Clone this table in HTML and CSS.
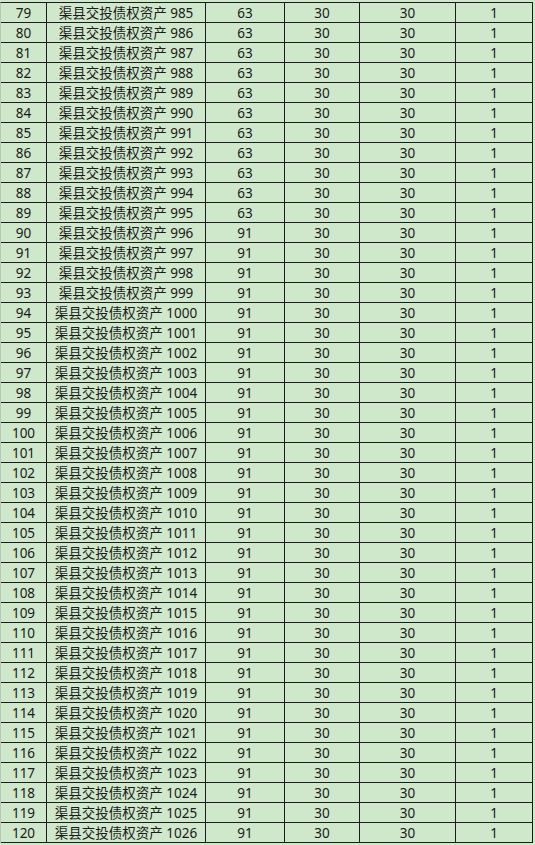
FILE: index.html
```html
<!DOCTYPE html>
<html lang="zh-CN">
<head>
<meta charset="utf-8">
<title>渠县交投债权资产</title>
<link rel="stylesheet" href="styles.css">
</head>
<body>
<table class="sheet">
<colgroup>
<col class="c-no"><col class="c-name"><col class="c-a"><col class="c-b"><col class="c-c"><col class="c-d">
</colgroup>
<tbody>
<tr><td>79</td><td>渠县交投债权资产 985</td><td>63</td><td>30</td><td>30</td><td>1</td></tr>
<tr><td>80</td><td>渠县交投债权资产 986</td><td>63</td><td>30</td><td>30</td><td>1</td></tr>
<tr><td>81</td><td>渠县交投债权资产 987</td><td>63</td><td>30</td><td>30</td><td>1</td></tr>
<tr><td>82</td><td>渠县交投债权资产 988</td><td>63</td><td>30</td><td>30</td><td>1</td></tr>
<tr><td>83</td><td>渠县交投债权资产 989</td><td>63</td><td>30</td><td>30</td><td>1</td></tr>
<tr><td>84</td><td>渠县交投债权资产 990</td><td>63</td><td>30</td><td>30</td><td>1</td></tr>
<tr><td>85</td><td>渠县交投债权资产 991</td><td>63</td><td>30</td><td>30</td><td>1</td></tr>
<tr><td>86</td><td>渠县交投债权资产 992</td><td>63</td><td>30</td><td>30</td><td>1</td></tr>
<tr><td>87</td><td>渠县交投债权资产 993</td><td>63</td><td>30</td><td>30</td><td>1</td></tr>
<tr><td>88</td><td>渠县交投债权资产 994</td><td>63</td><td>30</td><td>30</td><td>1</td></tr>
<tr><td>89</td><td>渠县交投债权资产 995</td><td>63</td><td>30</td><td>30</td><td>1</td></tr>
<tr><td>90</td><td>渠县交投债权资产 996</td><td>91</td><td>30</td><td>30</td><td>1</td></tr>
<tr><td>91</td><td>渠县交投债权资产 997</td><td>91</td><td>30</td><td>30</td><td>1</td></tr>
<tr><td>92</td><td>渠县交投债权资产 998</td><td>91</td><td>30</td><td>30</td><td>1</td></tr>
<tr><td>93</td><td>渠县交投债权资产 999</td><td>91</td><td>30</td><td>30</td><td>1</td></tr>
<tr><td>94</td><td>渠县交投债权资产 1000</td><td>91</td><td>30</td><td>30</td><td>1</td></tr>
<tr><td>95</td><td>渠县交投债权资产 1001</td><td>91</td><td>30</td><td>30</td><td>1</td></tr>
<tr><td>96</td><td>渠县交投债权资产 1002</td><td>91</td><td>30</td><td>30</td><td>1</td></tr>
<tr><td>97</td><td>渠县交投债权资产 1003</td><td>91</td><td>30</td><td>30</td><td>1</td></tr>
<tr><td>98</td><td>渠县交投债权资产 1004</td><td>91</td><td>30</td><td>30</td><td>1</td></tr>
<tr><td>99</td><td>渠县交投债权资产 1005</td><td>91</td><td>30</td><td>30</td><td>1</td></tr>
<tr><td>100</td><td>渠县交投债权资产 1006</td><td>91</td><td>30</td><td>30</td><td>1</td></tr>
<tr><td>101</td><td>渠县交投债权资产 1007</td><td>91</td><td>30</td><td>30</td><td>1</td></tr>
<tr><td>102</td><td>渠县交投债权资产 1008</td><td>91</td><td>30</td><td>30</td><td>1</td></tr>
<tr><td>103</td><td>渠县交投债权资产 1009</td><td>91</td><td>30</td><td>30</td><td>1</td></tr>
<tr><td>104</td><td>渠县交投债权资产 1010</td><td>91</td><td>30</td><td>30</td><td>1</td></tr>
<tr><td>105</td><td>渠县交投债权资产 1011</td><td>91</td><td>30</td><td>30</td><td>1</td></tr>
<tr><td>106</td><td>渠县交投债权资产 1012</td><td>91</td><td>30</td><td>30</td><td>1</td></tr>
<tr><td>107</td><td>渠县交投债权资产 1013</td><td>91</td><td>30</td><td>30</td><td>1</td></tr>
<tr><td>108</td><td>渠县交投债权资产 1014</td><td>91</td><td>30</td><td>30</td><td>1</td></tr>
<tr><td>109</td><td>渠县交投债权资产 1015</td><td>91</td><td>30</td><td>30</td><td>1</td></tr>
<tr><td>110</td><td>渠县交投债权资产 1016</td><td>91</td><td>30</td><td>30</td><td>1</td></tr>
<tr><td>111</td><td>渠县交投债权资产 1017</td><td>91</td><td>30</td><td>30</td><td>1</td></tr>
<tr><td>112</td><td>渠县交投债权资产 1018</td><td>91</td><td>30</td><td>30</td><td>1</td></tr>
<tr><td>113</td><td>渠县交投债权资产 1019</td><td>91</td><td>30</td><td>30</td><td>1</td></tr>
<tr><td>114</td><td>渠县交投债权资产 1020</td><td>91</td><td>30</td><td>30</td><td>1</td></tr>
<tr><td>115</td><td>渠县交投债权资产 1021</td><td>91</td><td>30</td><td>30</td><td>1</td></tr>
<tr><td>116</td><td>渠县交投债权资产 1022</td><td>91</td><td>30</td><td>30</td><td>1</td></tr>
<tr><td>117</td><td>渠县交投债权资产 1023</td><td>91</td><td>30</td><td>30</td><td>1</td></tr>
<tr><td>118</td><td>渠县交投债权资产 1024</td><td>91</td><td>30</td><td>30</td><td>1</td></tr>
<tr><td>119</td><td>渠县交投债权资产 1025</td><td>91</td><td>30</td><td>30</td><td>1</td></tr>
<tr><td>120</td><td>渠县交投债权资产 1026</td><td>91</td><td>30</td><td>30</td><td>1</td></tr>
</tbody>
</table>
</body>
</html>
```
FILE: styles.css
```css
html, body {
  margin: 0;
  padding: 0;
  background: #cfe7cb;
}
body {
  padding-top: 2px;
}
.sheet {
  table-layout: fixed;
  width: 533px;
  border-collapse: separate;
  border-spacing: 0;
  border-top: 1px solid #1c1c1c;
  border-left: 1px solid #b9c8b6;
  font-family: "Noto Sans", "Noto Sans CJK SC", sans-serif;
  font-size: 13.5px;
  color: #1a1a1a;
}
.c-no { width: 46px; }
.c-name { width: 159px; }
.c-a { width: 79px; }
.c-b { width: 75px; }
.c-c { width: 96px; }
.c-d { width: 77px; }
.sheet td {
  box-sizing: border-box;
  height: 20px;
  padding: 1px 0 0;
  line-height: 18px;
  text-align: center;
  white-space: nowrap;
  overflow: hidden;
  border-right: 1px solid #1c1c1c;
  border-bottom: 1px solid #1c1c1c;
}
```
